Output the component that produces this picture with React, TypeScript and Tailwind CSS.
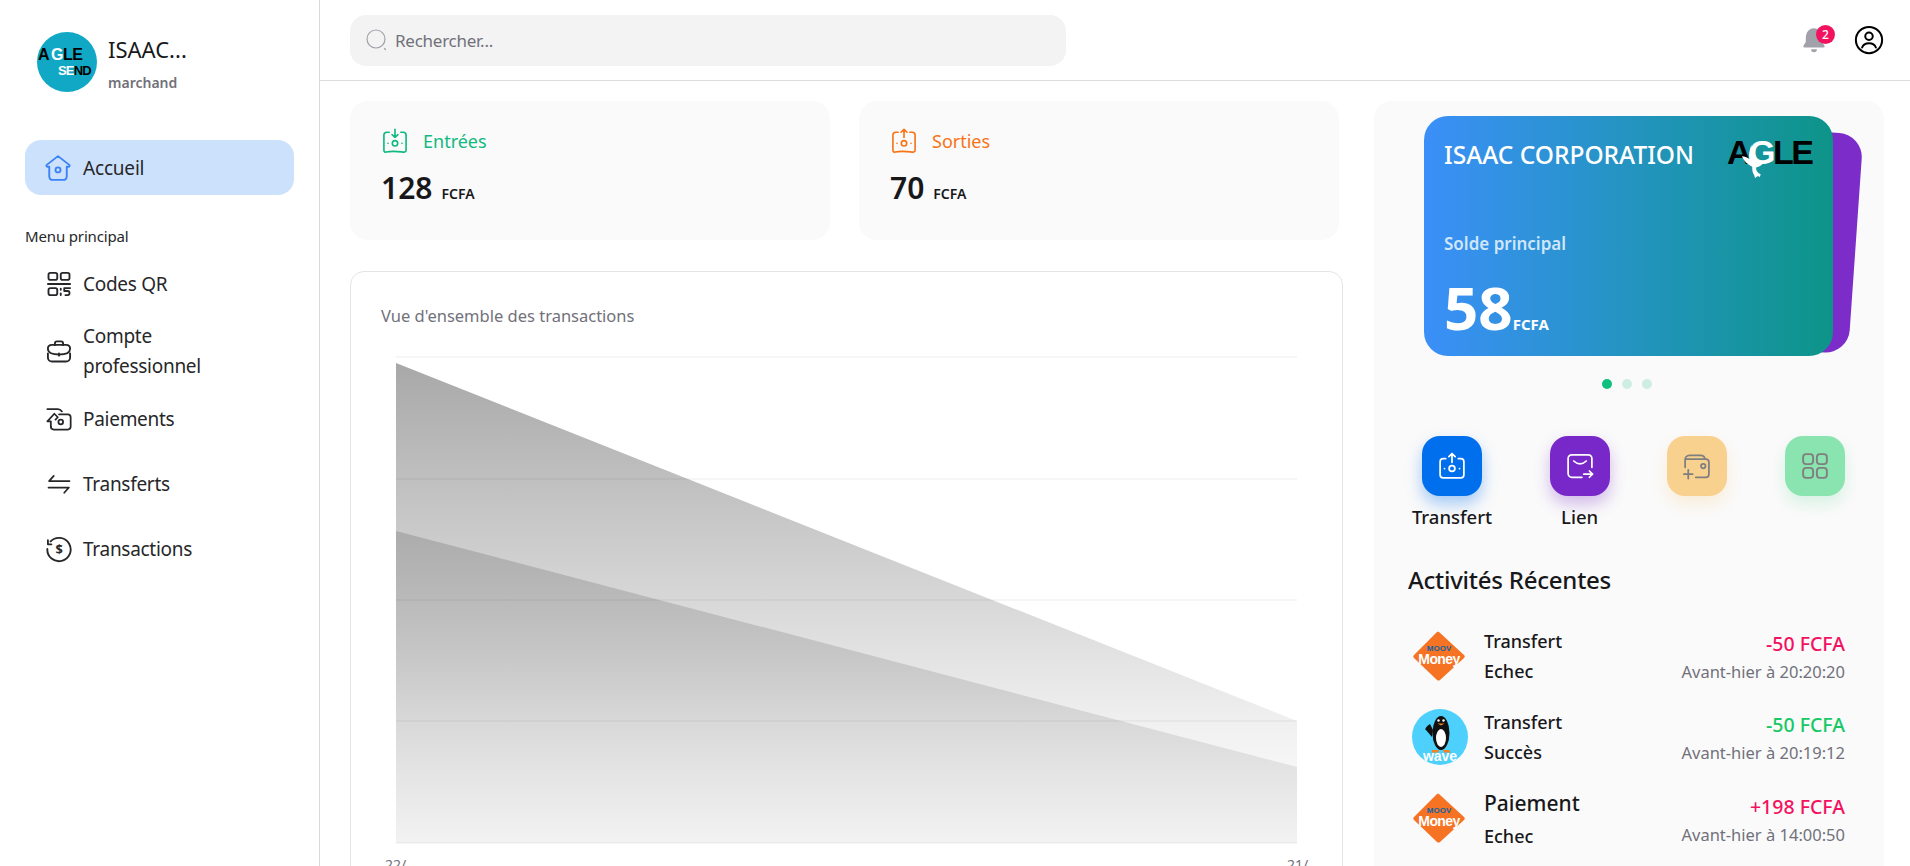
import type { ReactNode } from 'react'

function Ico({ size = 28, color = 'currentColor', sw = 1.5, children }: { size?: number; color?: string; sw?: number; children: ReactNode }) {
  return (
    <svg width={size} height={size} viewBox="0 0 24 24" fill="none" stroke={color} strokeWidth={sw} strokeLinecap="round" strokeLinejoin="round" className="shrink-0">
      {children}
    </svg>
  )
}

function HomeIcon() {
  return (
    <Ico size={30} color="#3b82f6">
      <path d="M12 2.5 3 9.5c-.6.5-.4 1.5.5 1.5H5v7.5C5 20.4 6.4 21.5 8 21.5h8c1.6 0 3-1.1 3-3V11h1.5c.9 0 1.1-1 .5-1.5L12 2.5Z" />
      <circle cx="12" cy="13.5" r="2" />
    </Ico>
  )
}

function QrIcon() {
  return (
    <Ico size={28} color="#27272a" sw={1.6}>
      <rect x="3" y="2.5" width="7.5" height="6" rx="1.6" />
      <rect x="13.5" y="2.5" width="7.5" height="6" rx="1.6" />
      <rect x="3" y="15.5" width="7.5" height="6" rx="1.6" />
      <path d="M2.5 12h19M13.5 16v1M13.5 20v1.5M16.5 15.5h5M16.5 15.5V18h3c1 0 1.500.8 1.500 1.700s-.5 1.800-1.500 1.800h-2" />
    </Ico>
  )
}

function CaseIcon() {
  return (
    <Ico size={28} color="#27272a" sw={1.6}>
      <path d="M8.500 7V5.500c0-1 .8-1.800 1.800-1.800h3.400c1 0 1.800.8 1.800 1.800V7" />
      <path d="M2.500 10c0-1.800 1.300-3.200 3.500-3.200h12c2.200 0 3.500 1.400 3.500 3.200 0 3.500-4 5-9.500 5s-9.500-1.500-9.500-5Z" />
      <path d="M2.500 14v3.500c0 2 1.500 3.500 3.500 3.500h12c2 0 3.500-1.500 3.500-3.500V14M12 14v2" />
    </Ico>
  )
}

function PayIcon() {
  return (
    <Ico size={28} color="#27272a" sw={1.5}>
      <path d="M2 3.500h9c1.500 0 2.500.5 3.500 2" />
      <path d="M5 19v-5H2l6-6.500 3 3-2 2" />
      <path d="M12 8h7.500c1.400 0 2.500 1 2.500 2.500v8c0 1.400-1.100 2.500-2.500 2.500H7.500C6 21 5 20 5 18.500" />
      <circle cx="13.500" cy="14.500" r="2" />
    </Ico>
  )
}

function SwapIcon() {
  return (
    <Ico size={28} color="#27272a" sw={1.5}>
      <path d="M21 9.500H3.500l4-4.500" />
      <path d="M3 15h17.500l-4 4.500" />
    </Ico>
  )
}

function HistoryIcon() {
  return (
    <Ico size={28} color="#27272a" sw={1.6}>
      <path d="M4.800 5.500A10 10 0 1 1 2 12" />
      <path d="M2.500 4.500V8h3" />
      <text x="12" y="16" textAnchor="middle" fontSize="11" fontWeight="700" fill="#27272a" stroke="none" fontFamily="Noto Sans">$</text>
    </Ico>
  )
}

function BoxIcon({ color, size = 28, up = false, flat = false }: { color: string; size?: number; up?: boolean; flat?: boolean }) {
  return (
    <Ico size={size} color={color} sw={1.4}>
      {flat ? (
        <path d="M7 6H5C3.500 6 2.500 7 2.500 8.500V19c0 1.500 1 2.500 2.500 2.500h14c1.500 0 2.500-1 2.500-2.500V8.500C21.500 7 20.500 6 19 6h-2" />
      ) : (
        <path d="M7 4.500H5C3.500 4.500 2.500 5.500 2.500 7v13c0 1 .9 1.800 2 1.500 5-1.300 10-.5 15 0 1 .1 2-.5 2-1.500V7c0-1.500-1-2.500-2.500-2.500h-2" />
      )}
      <circle cx="12" cy="14" r="2.300" />
      <path d="M6 14h.01M18 14h.01" />
      {up ? <path d="M12 9V2M9.500 4.500 12 2l2.500 2.500" /> : <path d="M12 2v7M9.500 6.500 12 9l2.500-2.500" />}
    </Ico>
  )
}

function AigleMark() {
  return (
    <div className="relative flex w-[86px] items-center text-[34px] leading-none font-black tracking-[-2.5px] text-black font-['Liberation_Sans',sans-serif]">
      <span>A</span>
      <span className="text-white">G</span>
      <span>LE</span>
      <svg width="32" height="46" viewBox="0 0 34 42" className="absolute left-[13px] top-[3px]">
        <path d="M12 4c-2 6-3 10-2 15-3-2-5-3-8-3 2 5 6 9 11 11 0 3 0 6 2 9l1 3 3-2 2 1 1-3c-3-1-5-3-5-7 4-1 7-3 8-6-3 1-6 1-9 0-2-5-3-11-4-18Z" fill="#fff" />
      </svg>
    </div>
  )
}

function Avatar() {
  return (
    <div className="flex h-[60px] w-[60px] shrink-0 flex-col justify-center overflow-hidden rounded-full bg-[#10a8c5] pl-[1px] font-['Liberation_Sans',sans-serif] font-black leading-none">
      <div className="flex items-center text-[16px] tracking-[-0.5px] text-black">
        A<span className="w-[2px]" /><span className="text-white">G</span>LE
      </div>
      <div className="ml-[20px] mt-[1px] text-[13px] tracking-[-0.8px] text-black">
        <span className="text-white">SE</span>ND
      </div>
    </div>
  )
}

function MoovLogo() {
  return (
    <div className="relative flex h-[50px] w-[54px] items-center justify-center">
      <svg width="54" height="50" viewBox="0 0 54 50" className="absolute inset-0">
        <path d="M27 1 52 24c1 1 1 2 0 3L28 49c-1 .8-2 .8-3 0L2 27c-1-1-1-2 0-3L25 1c.6-.5 1.400-.5 2 0Z" fill="#f57322" />
      </svg>
      <div className="relative mt-[-1px] flex flex-col items-center font-['Liberation_Sans',sans-serif] leading-none">
        <span className="text-[8px] font-bold text-[#0b62a8]">MOOV</span>
        <span className="mt-[-1px] text-[14px] font-bold tracking-[-0.6px] text-white">Money</span>
      </div>
    </div>
  )
}

function WaveLogo() {
  return (
    <div className="relative flex h-[56px] w-[56px] items-end justify-center overflow-hidden rounded-full bg-[#4dd0fb]">
      <svg width="56" height="56" viewBox="0 0 56 56" className="absolute inset-0">
        <path d="M18 15c-3 2-5 4-4.500 5.500L20 28l1-7Z" fill="#111" />
        <ellipse cx="29" cy="24" rx="8.500" ry="17" fill="#111" />
        <ellipse cx="29" cy="29" rx="5" ry="9" fill="#fff" />
        <circle cx="26.500" cy="11.500" r="1.200" fill="#fff" />
        <circle cx="31.500" cy="11.500" r="1.200" fill="#fff" />
        <path d="M25.500 14.500h7l-3.500 2Z" fill="#f58220" />
        <path d="M20 41h7l-1 2.500h-6.500ZM31 41h6l2 2.500h-7Z" fill="#f58220" />
      </svg>
      <span className="relative mb-[2px] font-['Liberation_Sans',sans-serif] text-[14px] leading-none font-bold text-white">wave</span>
    </div>
  )
}

function NavRow({ icon, label, className = '' }: { icon: ReactNode; label: ReactNode; className?: string }) {
  return (
    <div className={`flex items-center gap-[10px] pl-[45px] text-[19px] leading-[30px] tracking-[-0.015em] text-[#27272a] ${className}`}>
      <div className="flex w-[28px] justify-center">{icon}</div>
      <span className="max-w-[170px]">{label}</span>
    </div>
  )
}

function Sidebar() {
  return (
    <aside className="flex w-[320px] shrink-0 flex-col border-r border-[#d9d9dc] bg-white">
      <div className="flex h-[140px] items-start gap-[11px] pl-[37px] pt-[32px]">
        <Avatar />
        <div className="flex flex-col">
          <span className="text-[22px] leading-[34px] text-[#18181b]">ISAAC...</span>
          <span className="mt-[7px] text-[14px] leading-[20px] font-semibold text-[#71717a]">marchand</span>
        </div>
      </div>
      <div className="mx-[25px] flex h-[55px] w-[269px] items-center gap-[10px] rounded-[16px] bg-[#cce2fc] pl-[18px] text-[19px] tracking-[-0.01em] text-[#27272a]">
        <HomeIcon />
        <span className="pt-[2px]">Accueil</span>
      </div>
      <p className="mt-[30px] pl-[25px] text-[15px] leading-[22px] tracking-[-0.01em] text-[#27272a]">Menu principal</p>
      <NavRow className="mt-[22px] h-[30px]" icon={<QrIcon />} label="Codes QR" />
      <NavRow className="mt-[22px] h-[60px]" icon={<CaseIcon />} label="Compte professionnel" />
      <NavRow className="mt-[23px] h-[30px]" icon={<PayIcon />} label="Paiements" />
      <NavRow className="mt-[35px] h-[30px]" icon={<SwapIcon />} label="Transferts" />
      <NavRow className="mt-[35px] h-[30px]" icon={<HistoryIcon />} label="Transactions" />
    </aside>
  )
}

function Header() {
  return (
    <header className="flex h-[81px] shrink-0 items-center justify-between border-b border-[#dcdcdf] bg-white pl-[30px] pr-[26px]">
      <div className="flex h-[51px] w-[716px] items-center gap-[7px] rounded-[16px] bg-[#f3f3f4] pl-[16px] text-[17px] tracking-[-0.015em] text-[#71717a]">
        <svg width="22" height="22" viewBox="0 0 22 22" fill="none" stroke="#a1a1aa" strokeWidth="1.200" strokeLinecap="round">
          <circle cx="10" cy="10" r="9" />
          <path d="M18.500 19.500 19.500 20.500" />
        </svg>
        <span className="pt-[2px]">Rechercher...</span>
      </div>
      <div className="flex items-center gap-[26px]">
        <div className="relative h-[28px] w-[28px]">
          <svg width="28" height="28" viewBox="0 0 24 24" fill="#a1a1aa">
            <path d="M12 2a7 7 0 0 0-7 7v4.500L3 17c-.4.7 0 1.500 1 1.500h16c1 0 1.400-.8 1-1.500l-2-3.500V9a7 7 0 0 0-7-7Z" />
            <path d="M9.500 20a2.500 2.500 0 0 0 5 0Z" />
          </svg>
          <span className="absolute top-[-1px] right-[-7px] flex h-[19px] w-[19px] items-center justify-center rounded-full bg-[#f31260] text-[12px] leading-none font-medium text-white">2</span>
        </div>
        <svg width="30" height="30" viewBox="0 0 24 24" fill="none" stroke="#000" strokeWidth="1.600" strokeLinecap="round">
          <circle cx="12" cy="12" r="10.500" />
          <circle cx="12" cy="9" r="3" />
          <path d="M6.500 18c.8-2.400 2.800-3.500 5.500-3.500s4.700 1.100 5.500 3.500" />
        </svg>
      </div>
    </header>
  )
}

function StatCard({ label, value, color, up }: { label: string; value: string; color: string; up?: boolean }) {
  return (
    <div className="h-[139px] flex-1 rounded-[18px] bg-[#fafafa] pl-[31px] pt-[26px]">
      <div className="flex items-center gap-[14px] text-[18px] leading-[28px]" style={{ color }}>
        <BoxIcon color={color} up={up} />
        <span>{label}</span>
      </div>
      <div className="mt-[11px] flex items-baseline gap-[9px] text-[#18181b]">
        <span className="text-[30px] leading-[44px] font-semibold">{value}</span>
        <span className="text-[14px] font-semibold">FCFA</span>
      </div>
    </div>
  )
}

function Chart() {
  return (
    <svg width="930" height="530" viewBox="0 0 930 530" className="mt-[21px] block font-['Noto_Sans',sans-serif]">
      <defs>
        <linearGradient id="areaA" x1="0" y1="0" x2="0" y2="1">
          <stop offset="0%" stopColor="#888888" stopOpacity="0.73" />
          <stop offset="75%" stopColor="#888888" stopOpacity="0.126" />
          <stop offset="84%" stopColor="#888888" stopOpacity="0.076" />
          <stop offset="100%" stopColor="#888888" stopOpacity="0.02" />
        </linearGradient>
        <linearGradient id="areaB" x1="0" y1="0" x2="0" y2="1">
          <stop offset="0%" stopColor="#888888" stopOpacity="0.45" />
          <stop offset="100%" stopColor="#888888" stopOpacity="0.085" />
        </linearGradient>
      </defs>
      <path d="M15 13 916 371V493H15Z" fill="url(#areaA)" />
      <path d="M15 181 916 417V493H15Z" fill="url(#areaB)" />
      {[7, 129, 250, 371, 493].map((y) => (
        <line key={y} x1="15" x2="916" y1={y} y2={y} stroke="#000000" strokeOpacity="0.05" strokeWidth="1.500" />
      ))}
      <text x="4" y="520" fontSize="14" fill="#71717a">22/</text>
      <text x="906" y="520" fontSize="14" fill="#71717a">21/</text>
    </svg>
  )
}

function ActionButton({ bg, shadow, label, icon, wide }: { bg: string; shadow: string; label?: string; icon: ReactNode; wide?: boolean }) {
  return (
    <div className={`flex flex-col items-center ${wide ? 'w-[80px]' : 'w-[60px]'}`}>
      <div className={`flex h-[60px] w-[60px] items-center justify-center rounded-[18px] ${bg} ${shadow}`}>{icon}</div>
      {label && <span className="mt-[9px] text-[18.5px] leading-[24px] font-medium whitespace-nowrap text-[#18181b]">{label}</span>}
    </div>
  )
}

function Activity({ logo, title, status, amount, time, color, big }: { logo: ReactNode; title: string; status: string; amount: string; time: string; color: string; big?: boolean }) {
  return (
    <div className="flex h-[56px] items-center">
      <div className="flex w-[72px] shrink-0 justify-start">{logo}</div>
      <div className={`flex flex-col ${big ? 'pt-[2px]' : ''}`}>
        <span className={`${big ? 'text-[21px]' : 'text-[18px]'} leading-[30px] font-medium text-[#18181b]`}>{title}</span>
        <span className={`text-[18px] leading-[30px] font-medium text-[#18181b] ${big ? 'mt-[3px]' : ''}`}>{status}</span>
      </div>
      <div className={`ml-auto flex flex-col items-end ${big ? 'pt-[6px]' : 'pt-[4px]'}`}>
        <span className="text-[19.5px] leading-[28px] font-medium" style={{ color }}>{amount}</span>
        <span className="text-[16.5px] leading-[28px] text-[#71717a]">{time}</span>
      </div>
    </div>
  )
}

function RightPanel() {
  return (
    <section className="h-[900px] w-[510px] shrink-0 rounded-[18px] bg-[#fafafa] pt-[15px]">
      <div className="relative mx-[50px] h-[240px] w-[409px]">
        <div className="absolute top-[10px] left-[192px] h-[220px] w-[240px] rotate-[4deg] rounded-[24px] bg-[#7b2cc9]" />
        <div className="relative flex h-[240px] w-[409px] flex-col rounded-[24px] bg-gradient-to-r from-[#3b8ff8] to-[#0d9488] pl-[20px] pr-[20px] text-white">
          <div className="flex items-start justify-between">
            <span className="pt-[21px] text-[24.5px] leading-[36px] font-medium whitespace-nowrap">ISAAC CORPORATION</span>
            <div className="pt-[19px]"><AigleMark /></div>
          </div>
          <span className="mt-[58px] text-[17px] leading-[26px] font-semibold text-[#cfe6fb]">Solde principal</span>
          <div className="mt-[14px] flex items-baseline">
            <span className="text-[60px] leading-[72px] font-bold">58</span>
            <span className="text-[15px] font-bold">FCFA</span>
          </div>
        </div>
      </div>
      <div className="mt-[23px] flex justify-center gap-[10px] pr-[4px]">
        <span className="h-[10px] w-[10px] rounded-full bg-[#10c07f]" />
        <span className="h-[10px] w-[10px] rounded-full bg-[#cdeee0]" />
        <span className="h-[10px] w-[10px] rounded-full bg-[#cdeee0]" />
      </div>
      <div className="mt-[47px] flex justify-between pl-[38px] pr-[39px]">
        <ActionButton wide bg="bg-[#006fee]" shadow="shadow-[0_8px_16px_rgba(0,111,238,0.35)]" label="Transfert" icon={<BoxIcon color="#fff" size={30} up flat />} />
        <ActionButton
          bg="bg-[#7828c8]"
          shadow="shadow-[0_8px_16px_rgba(120,40,200,0.3)]"
          label="Lien"
          icon={
            <Ico color="#fff" size={30} sw={1.4}>
              <path d="M21.500 13V6c0-1.700-1.300-3-3-3h-13c-1.700 0-3 1.300-3 3v12c0 1.700 1.300 3 3 3h8" />
              <path d="M7 8c3 3 7 3 10 0M15 18.500h7M19.500 16l2.500 2.500-2.500 2.500" />
            </Ico>
          }
        />
        <ActionButton
          bg="bg-[#f9d18f]"
          shadow="shadow-[0_8px_16px_rgba(245,165,36,0.15)]"
          icon={
            <Ico color="#7f7f7f" size={30} sw={1.4}>
              <path d="M2.500 13V7c0-2 1.500-3.500 3.500-3.500h9c1.700 0 3 1 3.500 3" />
              <path d="M3 6.500h16c1.500 0 2.500 1 2.500 2.500v9.500c0 1.500-1 2.500-2.500 2.500h-8" />
              <circle cx="17" cy="12" r="1.800" />
              <path d="M1.500 18.500h7M5 15v7" />
            </Ico>
          }
        />
        <ActionButton
          bg="bg-[#8ae4b0]"
          shadow="shadow-[0_8px_16px_rgba(23,201,100,0.15)]"
          icon={
            <Ico color="#7f7f7f" size={30} sw={1.5}>
              <rect x="2.500" y="2.500" width="8" height="8" rx="2.500" />
              <rect x="13.500" y="2.500" width="8" height="8" rx="2.500" />
              <rect x="2.500" y="13.500" width="8" height="8" rx="2.500" />
              <rect x="13.500" y="13.500" width="8" height="8" rx="2.500" />
            </Ico>
          }
        />
      </div>
      <h2 className="mt-[33px] pl-[34px] text-[24px] leading-[36px] font-medium tracking-[-0.01em] text-[#18181b]">Activités Récentes</h2>
      <div className="mt-[30px] flex flex-col gap-[25px] pl-[38px] pr-[39px]">
        <Activity logo={<MoovLogo />} title="Transfert" status="Echec" amount="-50 FCFA" time="Avant-hier à 20:20:20" color="#f31260" />
        <Activity logo={<WaveLogo />} title="Transfert" status="Succès" amount="-50 FCFA" time="Avant-hier à 20:19:12" color="#17c964" />
        <Activity big logo={<MoovLogo />} title="Paiement" status="Echec" amount="+198 FCFA" time="Avant-hier à 14:00:50" color="#f31260" />
      </div>
    </section>
  )
}

export default function App() {
  return (
    <div className="flex h-[866px] w-[1910px] overflow-hidden bg-white font-['Noto_Sans','Open_Sans',sans-serif]">
      <Sidebar />
      <div className="flex min-w-0 flex-1 flex-col">
        <Header />
        <main className="flex min-h-0 flex-1 items-start gap-[31px] overflow-hidden pl-[30px] pt-[20px]">
          <div className="flex w-[993px] shrink-0 flex-col">
            <div className="flex w-[989px] gap-[29px]">
              <StatCard label="Entrées" value="128" color="#10b981" />
              <StatCard label="Sorties" value="70" color="#f97316" up />
            </div>
            <div className="mt-[31px] h-[640px] rounded-[14px] border border-[#e4e4e7] bg-white pl-[30px] pt-[30px]">
              <p className="pt-[1px] text-[16.5px] leading-[26px] text-[#71717a]">Vue d'ensemble des transactions</p>
              <Chart />
            </div>
          </div>
          <RightPanel />
        </main>
      </div>
    </div>
  )
}
